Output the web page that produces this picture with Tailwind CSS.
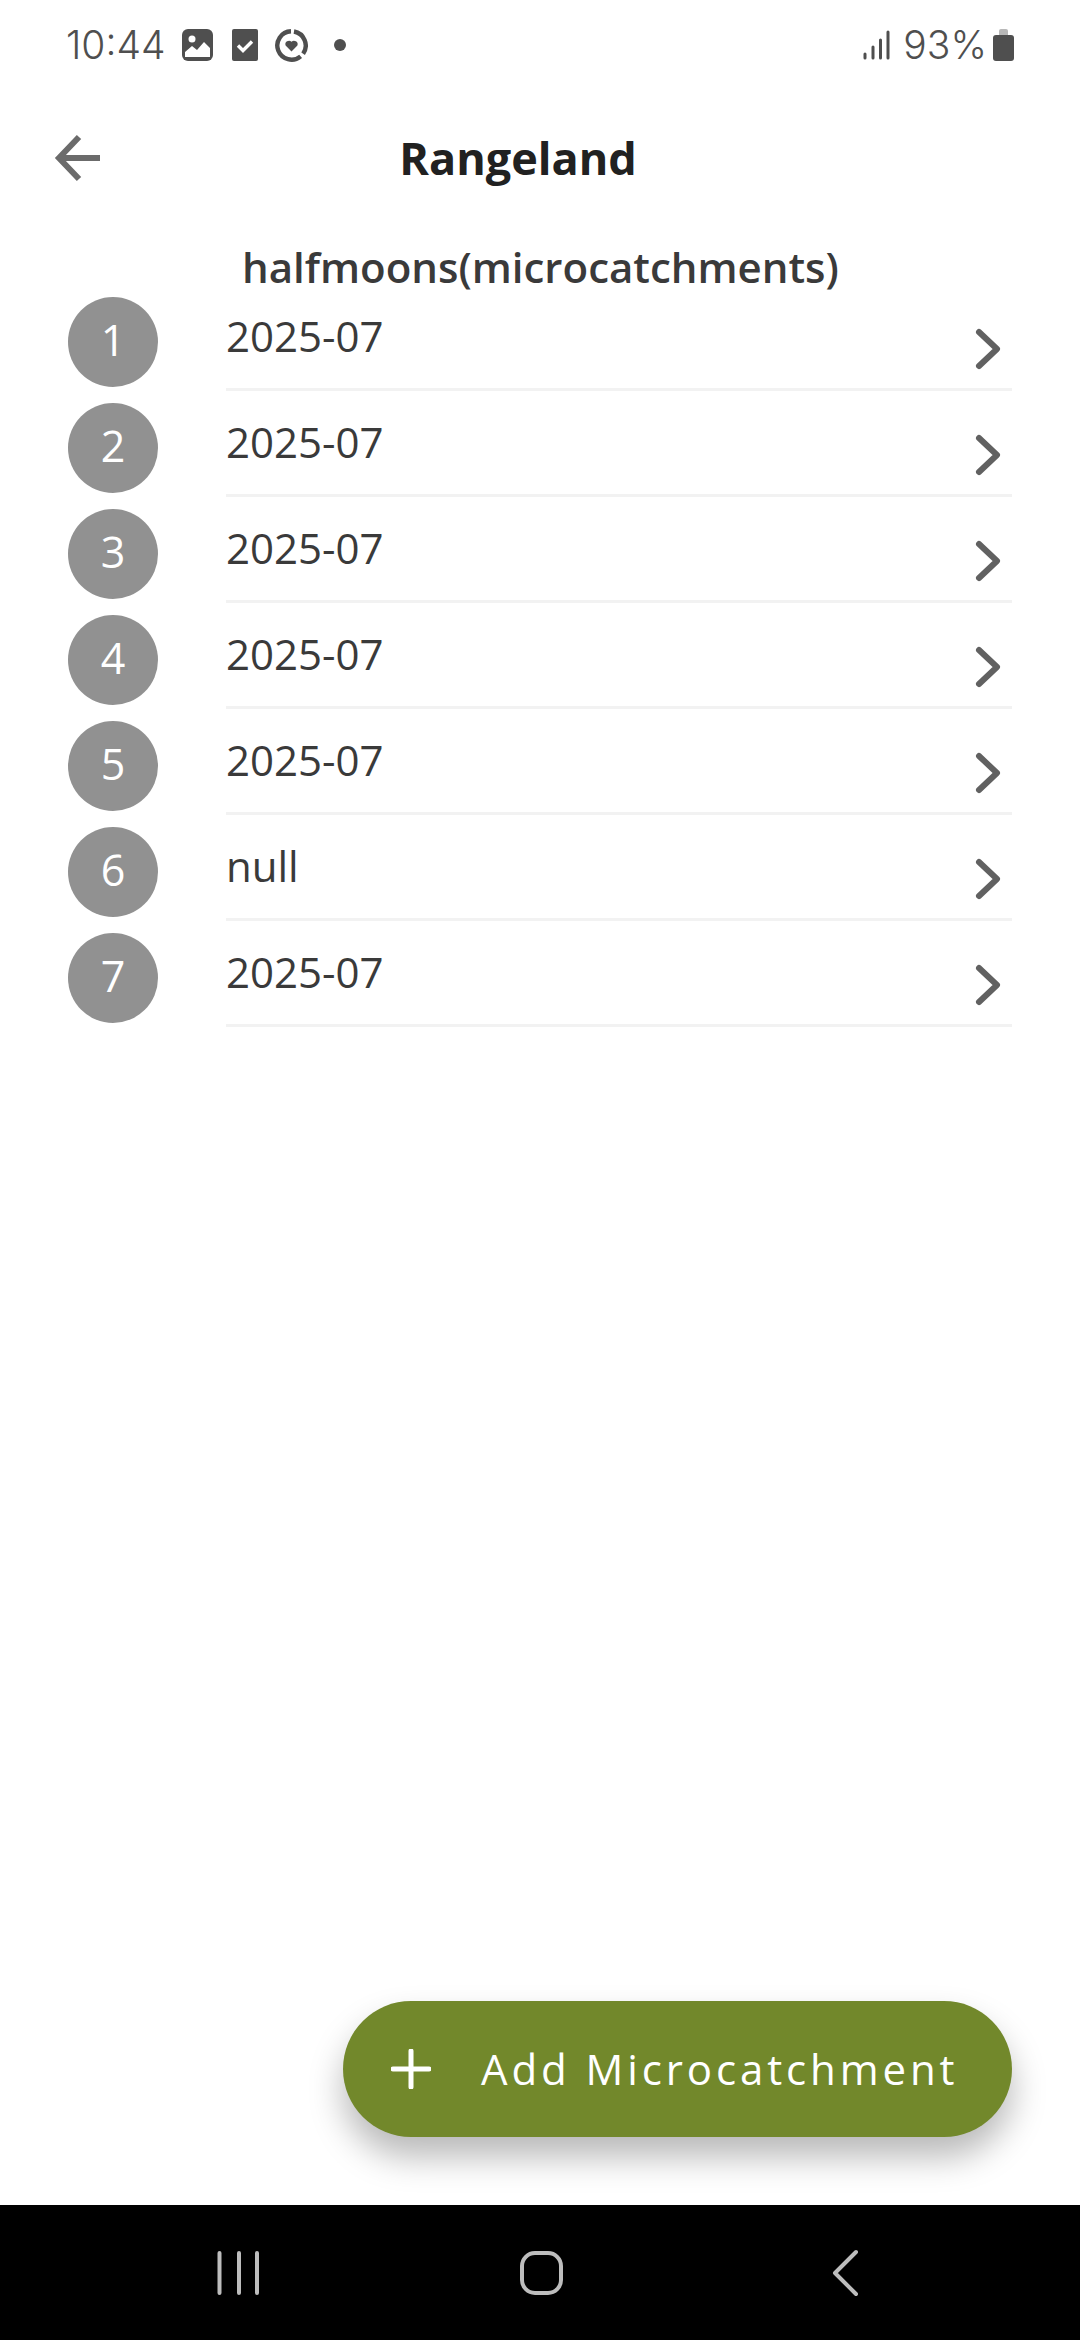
<!DOCTYPE html>
<html>
<head>
<meta charset="utf-8">
<script src="https://cdn.jsdelivr.net/npm/@tailwindcss/browser@4"></script>
</head>
<body class="m-0 bg-white">
<div class="relative flex h-[2340px] w-[1080px] flex-col overflow-hidden bg-white font-['Open_Sans',sans-serif]">
  <!-- status bar -->
  <div class="flex h-[90px] shrink-0 items-center justify-between pl-[66px] pr-[66px] text-[#4f4f4f]">
    <div class="flex items-center">
      <span class="font-['Inter',sans-serif] text-[39px] leading-[90px] font-light">10:44</span>
      <svg class="ml-[16px]" width="31" height="32" viewBox="0 0 31 32"><rect width="31" height="32" rx="6" fill="#4f4f4f"/><circle cx="10" cy="10" r="3.5" fill="#fff"/><path d="M3 28V23l7-6 5 4 7-8 6 6v9z" fill="#fff"/></svg>
      <svg class="ml-[19px]" width="26" height="32" viewBox="0 0 26 32"><rect width="26" height="32" rx="2" fill="#4f4f4f"/><path d="M6 16.500l5 5 9-9" fill="none" stroke="#fff" stroke-width="3.400"/></svg>
      <svg class="ml-[17px]" width="33" height="33" viewBox="0 0 33 33"><path d="M18.970 2.520A14.200 14.200 0 0 1 28.130 24.640M25.630 27.380A14.200 14.200 0 1 1 16 2.300" fill="none" stroke="#4f4f4f" stroke-width="4.400"/><path d="M16.500 22.500L10.600 16.600A3.600 3.600 0 0 1 16.500 12.800A3.600 3.600 0 0 1 22.400 16.600Z" fill="#4f4f4f"/></svg>
      <span class="ml-[26px] h-[12px] w-[12px] rounded-full bg-[#4f4f4f]"></span>
    </div>
    <div class="flex items-center">
      <svg width="27" height="30" viewBox="0 0 27 30"><g fill="none" stroke="#4f4f4f" stroke-width="3" stroke-linecap="round"><path d="M2 28v-4M10 28V17M17.500 28V10M25 28V2"/></g></svg>
      <span class="ml-[13px] font-['Inter',sans-serif] text-[39px] leading-[90px] font-light">93%</span>
      <svg class="ml-[6px]" width="21" height="32" viewBox="0 0 21 32"><path d="M6 7V2a2 2 0 0 1 2-2h5a2 2 0 0 1 2 2v5z" fill="#b8b8b8"/><rect y="6" width="21" height="26" rx="3" fill="#4f4f4f"/></svg>
    </div>
  </div>

  <!-- header -->
  <div class="relative flex h-[136px] shrink-0 items-center justify-center">
    <svg class="absolute left-[53px] top-[44px]" width="48" height="48" viewBox="0 0 48 48"><path d="M47 24H6M26 3L6 24l20 21" fill="none" stroke="#6b6b6b" stroke-width="6"/></svg>
    <span class="ml-[-44px] text-[45px] leading-[136px] font-bold text-[#212121]">Rangeland</span>
  </div>

  <!-- list -->
  <main class="flex min-h-0 flex-1 flex-col">
    <h2 class="ml-[242px] h-[59px] text-[42px] leading-[82px] font-semibold text-[#3a3a3a]">halfmoons(microcatchments)</h2>
    <ul class="flex flex-col">
      <li class="flex h-[106px] pl-[68px] pr-[68px]"><span class="mt-[12px] flex h-[90px] w-[90px] shrink-0 items-center justify-center rounded-full bg-[#919191] pb-[3px] text-[43px] font-medium text-white">1</span><div class="ml-[68px] flex flex-1 justify-between border-b-[3px] border-[#f2f2f2]"><span class="mt-[19px] text-[42px] leading-[64px] text-[#3a3a3a]">2025-07</span><svg class="mr-[9px] mt-[40px]" width="30" height="48" viewBox="0 0 30 48"><path d="M6 7l18 17L6 41" fill="none" stroke="#616161" stroke-width="6" stroke-linecap="round" stroke-linejoin="round"/></svg></div></li>
      <li class="flex h-[106px] pl-[68px] pr-[68px]"><span class="mt-[12px] flex h-[90px] w-[90px] shrink-0 items-center justify-center rounded-full bg-[#919191] pb-[3px] text-[43px] font-medium text-white">2</span><div class="ml-[68px] flex flex-1 justify-between border-b-[3px] border-[#f2f2f2]"><span class="mt-[19px] text-[42px] leading-[64px] text-[#3a3a3a]">2025-07</span><svg class="mr-[9px] mt-[40px]" width="30" height="48" viewBox="0 0 30 48"><path d="M6 7l18 17L6 41" fill="none" stroke="#616161" stroke-width="6" stroke-linecap="round" stroke-linejoin="round"/></svg></div></li>
      <li class="flex h-[106px] pl-[68px] pr-[68px]"><span class="mt-[12px] flex h-[90px] w-[90px] shrink-0 items-center justify-center rounded-full bg-[#919191] pb-[3px] text-[43px] font-medium text-white">3</span><div class="ml-[68px] flex flex-1 justify-between border-b-[3px] border-[#f2f2f2]"><span class="mt-[19px] text-[42px] leading-[64px] text-[#3a3a3a]">2025-07</span><svg class="mr-[9px] mt-[40px]" width="30" height="48" viewBox="0 0 30 48"><path d="M6 7l18 17L6 41" fill="none" stroke="#616161" stroke-width="6" stroke-linecap="round" stroke-linejoin="round"/></svg></div></li>
      <li class="flex h-[106px] pl-[68px] pr-[68px]"><span class="mt-[12px] flex h-[90px] w-[90px] shrink-0 items-center justify-center rounded-full bg-[#919191] pb-[3px] text-[43px] font-medium text-white">4</span><div class="ml-[68px] flex flex-1 justify-between border-b-[3px] border-[#f2f2f2]"><span class="mt-[19px] text-[42px] leading-[64px] text-[#3a3a3a]">2025-07</span><svg class="mr-[9px] mt-[40px]" width="30" height="48" viewBox="0 0 30 48"><path d="M6 7l18 17L6 41" fill="none" stroke="#616161" stroke-width="6" stroke-linecap="round" stroke-linejoin="round"/></svg></div></li>
      <li class="flex h-[106px] pl-[68px] pr-[68px]"><span class="mt-[12px] flex h-[90px] w-[90px] shrink-0 items-center justify-center rounded-full bg-[#919191] pb-[3px] text-[43px] font-medium text-white">5</span><div class="ml-[68px] flex flex-1 justify-between border-b-[3px] border-[#f2f2f2]"><span class="mt-[19px] text-[42px] leading-[64px] text-[#3a3a3a]">2025-07</span><svg class="mr-[9px] mt-[40px]" width="30" height="48" viewBox="0 0 30 48"><path d="M6 7l18 17L6 41" fill="none" stroke="#616161" stroke-width="6" stroke-linecap="round" stroke-linejoin="round"/></svg></div></li>
      <li class="flex h-[106px] pl-[68px] pr-[68px]"><span class="mt-[12px] flex h-[90px] w-[90px] shrink-0 items-center justify-center rounded-full bg-[#919191] pb-[3px] text-[43px] font-medium text-white">6</span><div class="ml-[68px] flex flex-1 justify-between border-b-[3px] border-[#f2f2f2]"><span class="mt-[19px] text-[42px] leading-[64px] text-[#3a3a3a]">null</span><svg class="mr-[9px] mt-[40px]" width="30" height="48" viewBox="0 0 30 48"><path d="M6 7l18 17L6 41" fill="none" stroke="#616161" stroke-width="6" stroke-linecap="round" stroke-linejoin="round"/></svg></div></li>
      <li class="flex h-[106px] pl-[68px] pr-[68px]"><span class="mt-[12px] flex h-[90px] w-[90px] shrink-0 items-center justify-center rounded-full bg-[#919191] pb-[3px] text-[43px] font-medium text-white">7</span><div class="ml-[68px] flex flex-1 justify-between border-b-[3px] border-[#f2f2f2]"><span class="mt-[19px] text-[42px] leading-[64px] text-[#3a3a3a]">2025-07</span><svg class="mr-[9px] mt-[40px]" width="30" height="48" viewBox="0 0 30 48"><path d="M6 7l18 17L6 41" fill="none" stroke="#616161" stroke-width="6" stroke-linecap="round" stroke-linejoin="round"/></svg></div></li>
    </ul>
  </main>

  <!-- floating button -->
  <button class="absolute left-[343px] top-[2001px] flex h-[136px] w-[669px] items-center rounded-[68px] bg-[#72882b] pl-[48px] text-white shadow-[0_20px_34px_rgba(0,0,0,0.28)]">
    <svg width="40" height="40" viewBox="0 0 40 40"><path d="M20 2v36M2 20h36" fill="none" stroke="#fff" stroke-width="5" stroke-linecap="round"/></svg>
    <span class="ml-[50px] text-[42px] leading-none tracking-[3.9px] whitespace-nowrap">Add Microcatchment</span>
  </button>

  <!-- nav bar -->
  <nav class="relative flex h-[135px] shrink-0 items-center bg-black">
    <svg class="absolute left-[215px] top-[45px]" width="46" height="46" viewBox="0 0 46 46"><path d="M4.500 3v40M24 3v40M42 3v40" fill="none" stroke="#bdbdbd" stroke-width="4" stroke-linecap="round"/></svg>
    <svg class="absolute left-[519px] top-[45px]" width="45" height="46" viewBox="0 0 45 46"><rect x="3" y="3" width="39" height="40" rx="13" fill="none" stroke="#bdbdbd" stroke-width="4"/></svg>
    <svg class="absolute left-[829px] top-[44px]" width="30" height="48" viewBox="0 0 30 48"><path d="M27 3L6 24l21 21" fill="none" stroke="#bdbdbd" stroke-width="4" stroke-linecap="round" stroke-linejoin="round"/></svg>
  </nav>
</div>
</body>
</html>
